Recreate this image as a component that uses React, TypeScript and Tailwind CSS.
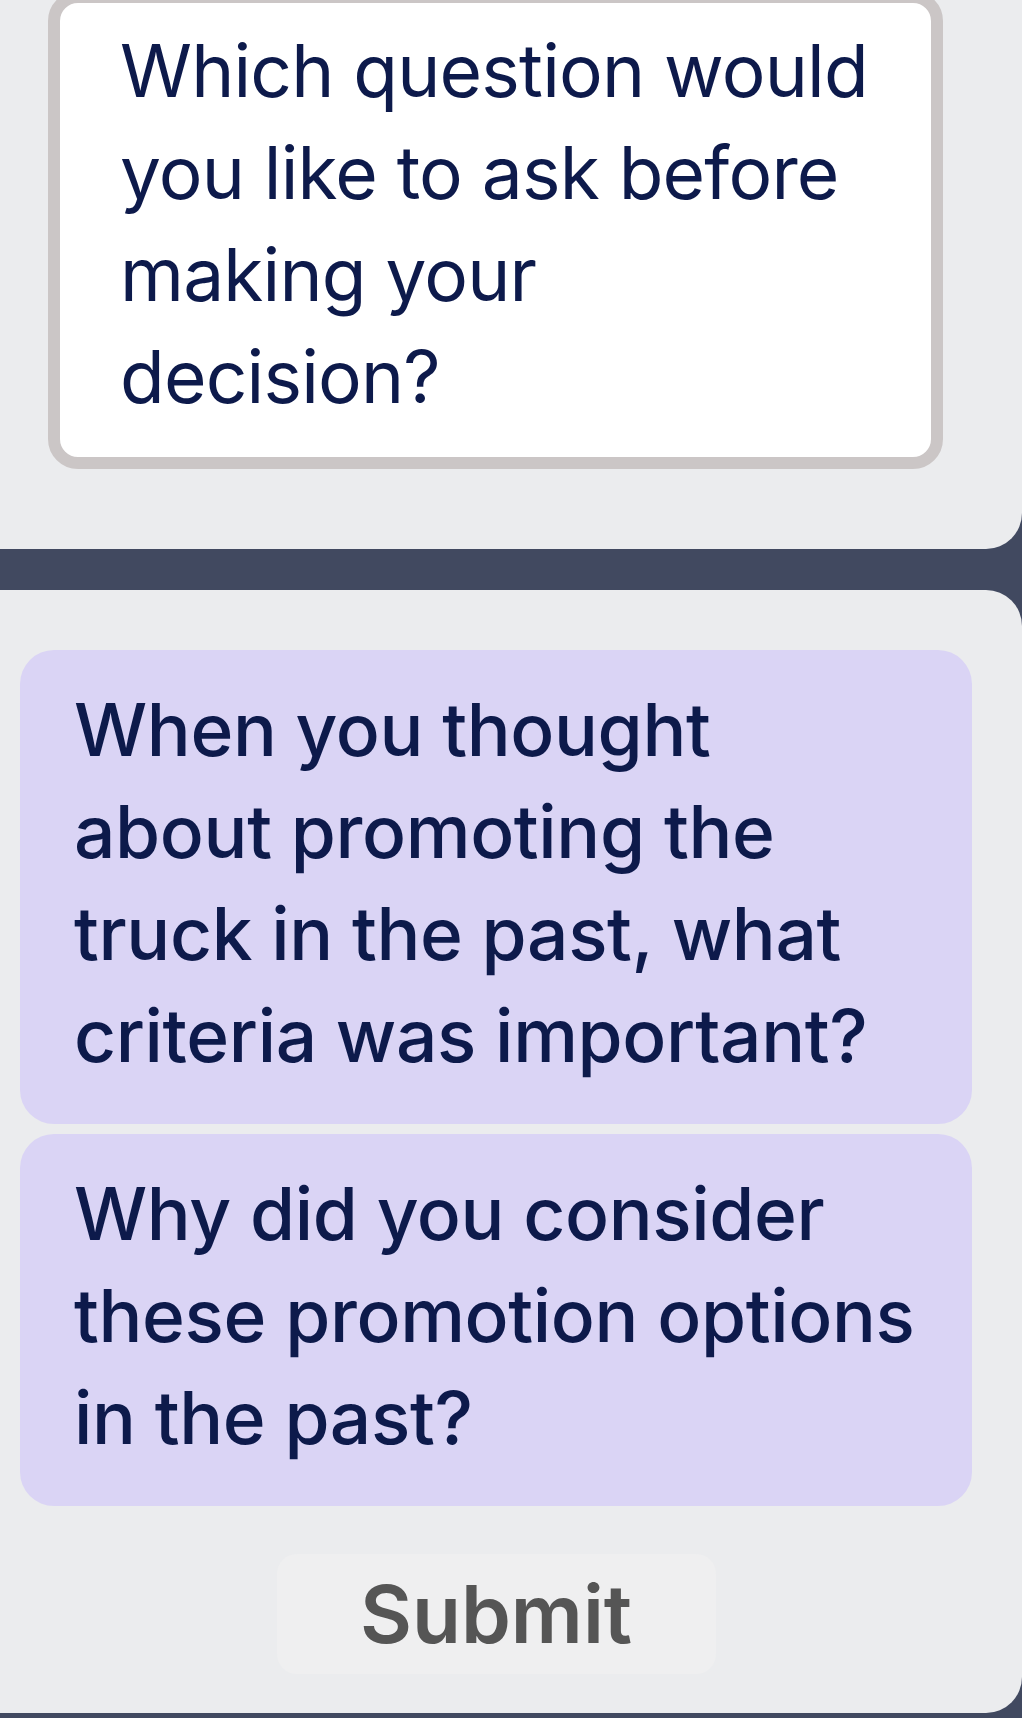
import React from "react";

const prompt = ["Which question would", "you like to ask before", "making your", "decision?"];

const questions = [
  ["When you thought", "about promoting the", "truck in the past, what", "criteria was important?"],
  ["Why did you consider", "these promotion options", "in the past?"],
];

export default function App() {
  return (
    <div
      className="min-h-[1718px] w-full overflow-hidden bg-[#414960] pb-[5px]"
      style={{ fontFamily: "Inter, 'Noto Sans', sans-serif" }}
    >
      {/* prompt panel */}
      <div className="rounded-br-[36px] bg-[#ebecee] pb-[80px] pl-[48px] pr-[79px]">
        <div className="-mt-[9px] rounded-[30px] border-[12px] border-[#cbc6c6] bg-white pb-[29px] pl-[60px] pr-[40px] pt-[17px]">
          <p className="text-[73px] font-normal leading-[102px] tracking-[-0.011em] text-[#0d1a4b]">
            {prompt.map((line) => (
              <span key={line} className="block whitespace-nowrap">
                {line}
              </span>
            ))}
          </p>
        </div>
      </div>

      {/* options panel */}
      <div className="mt-[41px] rounded-r-[36px] bg-[#ebecee] pb-[39px] pl-[20px] pr-[50px] pt-[60px]">
        <div className="flex flex-col gap-[10px]">
          {questions.map((lines) => (
            <button
              key={lines[0]}
              className="rounded-[34px] bg-[#dad4f5] pb-[37px] pl-[54px] pr-[30px] pt-[29px] text-left"
            >
              {lines.map((line) => (
                <span
                  key={line}
                  className="block whitespace-nowrap text-[73px] font-medium leading-[102px] tracking-[-0.005em] text-[#0d1a4b]"
                >
                  {line}
                </span>
              ))}
            </button>
          ))}
        </div>
        <div className="mt-[48px] flex justify-center">
          <button className="flex h-[120px] w-[439px] items-center justify-center rounded-[20px] bg-[#efeff0] text-[80px] font-semibold text-[#555555]">
            Submit
          </button>
        </div>
      </div>
    </div>
  );
}
